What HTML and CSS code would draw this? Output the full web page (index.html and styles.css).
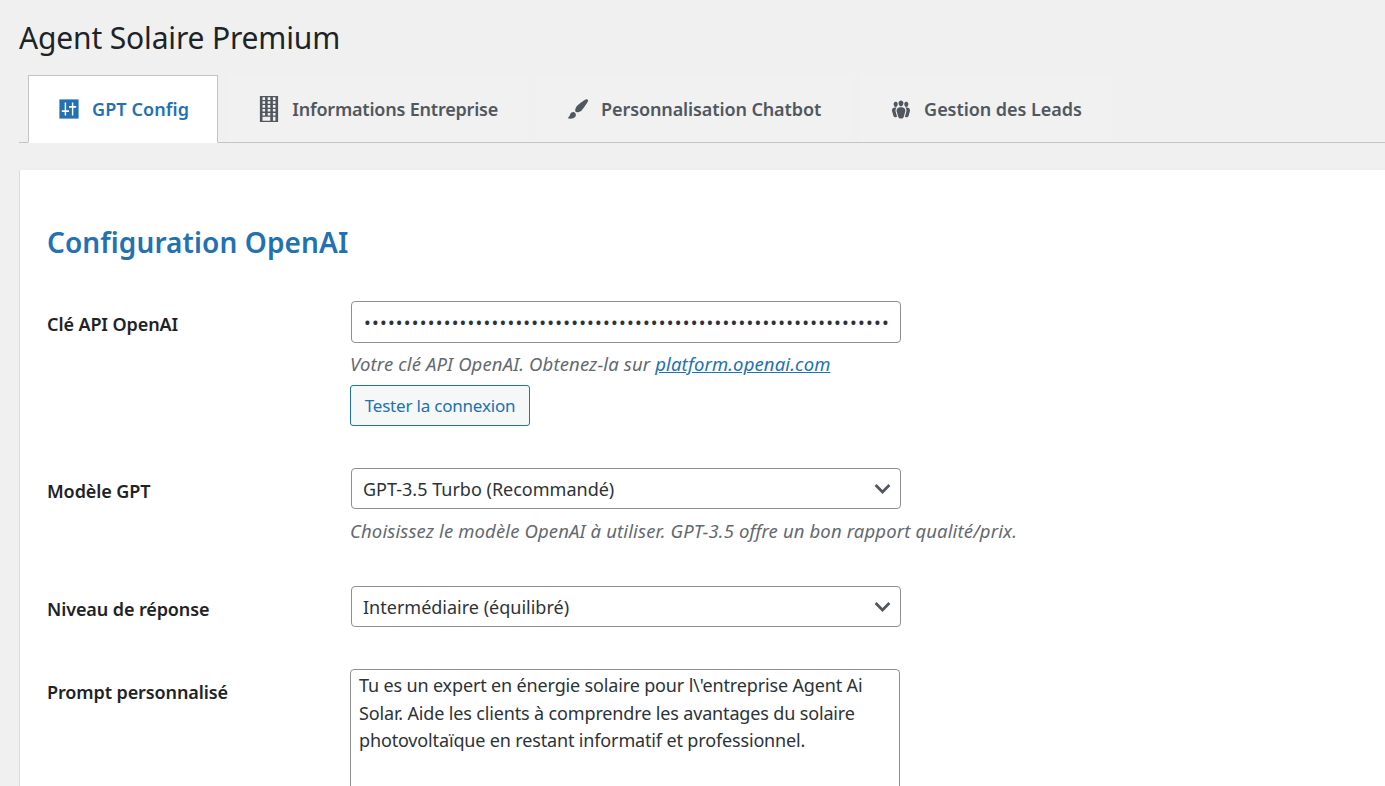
FILE: index.html
```html
<!DOCTYPE html>
<html lang="fr">
<head>
<meta charset="utf-8">
<title>Agent Solaire Premium</title>
<link rel="stylesheet" href="styles.css">
</head>
<body>
<div class="wrap">
  <h1 class="page-title">Agent Solaire Premium</h1>
  <nav class="tabs">
    <a class="tab active tab-gpt"><svg class="icon" viewBox="0 0 20 20"><path d="M2 2h16v16H2z"/><path class="slider" d="M6.4 4.500h1.200v6.500h2.400v1.500H7.600v3h-1.200v-3H4v-1.500h2.400zM12.400 4.500h1.200v3H16V9h-2.400v6.500h-1.200V9H10V7.500h2.400z"/></svg>GPT Config</a>
    <a class="tab tab-info"><svg class="icon icon-tall" viewBox="0 0 20 20"><path d="M3 20h14V0H3v20zM7 3H5V1h2v2zm4 0H9V1h2v2zm4 0h-2V1h2v2zM7 6H5V4h2v2zm4 0H9V4h2v2zm4 0h-2V4h2v2zM7 9H5V7h2v2zm4 0H9V7h2v2zm4 0h-2V7h2v2zm-8 3H5v-2h2v2zm4 0H9v-2h2v2zm4 0h-2v-2h2v2zm-8 3H5v-2h2v2zm4 0H9v-2h2v2zm4 0h-2v-2h2v2zm-4 4H5v-3h6v3zm4 0h-2v-3h2v3z"/></svg>Informations Entreprise</a>
    <a class="tab tab-chat"><svg class="icon" viewBox="0 0 20 20"><path d="M18.33 3.57s.27-.8-.31-1.36c-.53-.52-1.22-.24-1.22-.24-.61.3-5.76 3.47-7.67 5.57-.86.96-2.06 3.79-1.09 4.82.92.98 3.96-.17 4.79-1 2.06-2.06 5.21-7.17 5.5-7.79zM1.4 17.65c2.37-1.56 1.46-3.41 3.23-4.64.93-.65 2.22-.62 3.08.29.63.67.8 2.57-.16 3.46-1.57 1.45-4 1.55-6.15.89z"/></svg>Personnalisation Chatbot</a>
    <a class="tab tab-leads"><svg class="icon" viewBox="0 0 20 20"><path d="M8.03 4.46c-.29 1.28.55 3.46 1.97 3.46 1.41 0 2.25-2.18 1.96-3.46-.22-.98-1.08-1.63-1.96-1.63-.89 0-1.74.65-1.97 1.63zm-4.13.9c-.25 1.08.47 2.93 1.67 2.93s1.92-1.85 1.67-2.93c-.19-.83-.92-1.39-1.67-1.39s-1.48.56-1.67 1.39zm8.86 0c-.25 1.08.47 2.93 1.66 2.93 1.2 0 1.92-1.85 1.67-2.93-.19-.83-.92-1.39-1.67-1.39-.74 0-1.47.56-1.66 1.39zm-.59 11.43l1.25-4.3C14.2 10 12.71 8.47 10 8.47c-2.72 0-4.21 1.53-3.44 4.02l1.26 4.3C8.05 17.51 9 18 10 18c.98 0 1.94-.49 2.17-1.21zm-6.1-7.63c-.49.67-.96 1.83-.42 3.59l1.12 3.79c-.34.2-.77.31-1.2.31-.85 0-1.65-.41-1.85-1.03l-1.07-3.65c-.65-2.11.61-3.4 2.92-3.4.27 0 .54.02.79.06-.1.1-.2.22-.29.33zm8.35-.39c2.31 0 3.58 1.29 2.92 3.4l-1.07 3.65c-.2.62-1 1.03-1.85 1.03-.43 0-.86-.11-1.2-.31l1.11-3.79c.55-1.76.08-2.92-.41-3.59-.09-.11-.19-.23-.29-.33.25-.04.51-.06.79-.06z"/></svg>Gestion des Leads</a>
  </nav>
  <main class="card">
    <h2 class="card-title">Configuration OpenAI</h2>
    <div class="row row-key">
      <label class="label" for="key">Clé API OpenAI</label>
      <div class="field">
        <input class="control control-key" id="key" type="password" value="skproj0123456789abcdefghijklmnopqrstuvwxyzABCDEFGHIJKLMNOPQRSTUVWXYZ0123456789abcdefghij">
        <p class="desc">Votre clé API OpenAI. Obtenez-la sur <a href="#">platform.openai.com</a></p>
        <button class="btn" type="button">Tester la connexion</button>
      </div>
    </div>
    <div class="row row-model">
      <label class="label" for="model">Modèle GPT</label>
      <div class="field">
        <select class="control select" id="model"><option>GPT-3.5 Turbo (Recommandé)</option></select>
        <p class="desc">Choisissez le modèle OpenAI à utiliser. GPT-3.5 offre un bon rapport qualité/prix.</p>
      </div>
    </div>
    <div class="row row-level">
      <label class="label" for="level">Niveau de réponse</label>
      <div class="field">
        <select class="control select" id="level"><option>Intermédiaire (équilibré)</option></select>
      </div>
    </div>
    <div class="row row-prompt">
      <label class="label" for="prompt">Prompt personnalisé</label>
      <div class="field">
        <textarea class="area" id="prompt" spellcheck="false">Tu es un expert en énergie solaire pour l\'entreprise Agent Ai Solar. Aide les clients à comprendre les avantages du solaire photovoltaïque en restant informatif et professionnel.</textarea>
      </div>
    </div>
  </main>
</div>
</body>
</html>
```
FILE: styles.css
```css
* { box-sizing: border-box; }
html, body { margin: 0; height: 786px; overflow: hidden; }
body {
  background: #f0f0f1;
  color: #1d2327;
  font-family: "Noto Sans", "Open Sans", sans-serif;
}
.wrap { padding: 0 0 0 19px; height: 786px; overflow: hidden; }
.page-title {
  margin: 0;
  padding-top: 16px;
  height: 75px;
  font-size: 30px;
  line-height: 44px;
  font-weight: 400;
  letter-spacing: -0.16px;
}
.tabs {
  display: flex;
  height: 68px;
  padding-left: 9px;
  gap: 10px;
  border-bottom: 1px solid #c3c4c7;
}
.tab {
  display: flex;
  align-items: center;
  gap: 11px;
  height: 67px;
  padding: 0 29px;
  background: #f1f1f2;
  color: #50575e;
  font-size: 18px;
  font-weight: 600;
}
.tab-gpt { letter-spacing: 0.1px; }
.tab-info { letter-spacing: -0.2px; }
.tab-chat { letter-spacing: -0.11px; }
.tab-leads { letter-spacing: -0.05px; }
.tab.active {
  height: 68px;
  padding: 0 28px;
  background: #fff;
  border: 1px solid #c3c4c7;
  border-bottom: 1px solid #fff;
  color: #2271b1;
}
.icon { width: 24px; height: 24px; fill: currentColor; flex: none; }
.icon-tall { width: 26px; height: 26px; margin: 0 -1px; }
.slider { fill: #fff; }
.card {
  margin-top: 27px;
  height: 640px;
  padding: 50px 0 0 27px;
  background: #fff;
  border-left: 1px solid #dcdcde;
}
.card-title {
  margin: 0 0 37px;
  font-size: 28px;
  line-height: 44px;
  font-weight: 600;
  color: #2271b1;
  letter-spacing: 0.1px;
  height: 44px;
}
.row { display: grid; grid-template-columns: 303px 1fr; }
.row-key { height: 167px; }
.row-model { height: 118px; }
.row-level { height: 83px; }
.label {
  font-size: 18px;
  font-weight: 600;
  line-height: 24px;
  padding-top: 11px;
  letter-spacing: -0.1px;
}
.control {
  display: block;
  width: 550px;
  margin-left: 1px;
  height: 42px;
  background: #fff;
  border: 1px solid #8c8f94;
  border-radius: 4px;
  color: #2c3338;
  font: 400 18px/24px "Noto Sans", "Open Sans", sans-serif;
  padding: 0 11px;
  outline: none;
}
.control-key { padding: 0 12px; letter-spacing: 1.2px; }
.select {
  appearance: none;
  height: 41px;
  background-image: url("data:image/svg+xml,%3Csvg xmlns='http://www.w3.org/2000/svg' viewBox='0 0 20 20'%3E%3Cpath fill='none' stroke='%2350575e' stroke-width='2.4' d='M4 7l6 6 6-6'/%3E%3C/svg%3E");
  background-repeat: no-repeat;
  background-position: right 6px center;
  background-size: 23px 23px;
}
.desc {
  margin: 8px 0 0;
  font-size: 18.5px;
  line-height: 26px;
  font-style: italic;
  color: #646970;
  letter-spacing: 0.13px;
}
.select + .desc { margin-top: 9px; }
.desc a { color: #2271b1; text-decoration: underline; }
.btn {
  display: block;
  margin-top: 8px;
  width: 180px;
  height: 41px;
  background: #f6f7f7;
  border: 1px solid #2271b1;
  border-radius: 3px;
  color: #2271b1;
  font: 400 17px/24px "Noto Sans", "Open Sans", sans-serif;
  letter-spacing: -0.2px;
  padding: 0;
}
.area {
  display: block;
  width: 550px;
  height: 160px;
  padding: 2px 8px;
  background: #fff;
  border: 1px solid #8c8f94;
  border-radius: 4px;
  color: #2c3338;
  font: 400 18px/27.5px "Noto Sans", "Open Sans", sans-serif;
  letter-spacing: -0.15px;
  resize: none;
  outline: none;
}
```
